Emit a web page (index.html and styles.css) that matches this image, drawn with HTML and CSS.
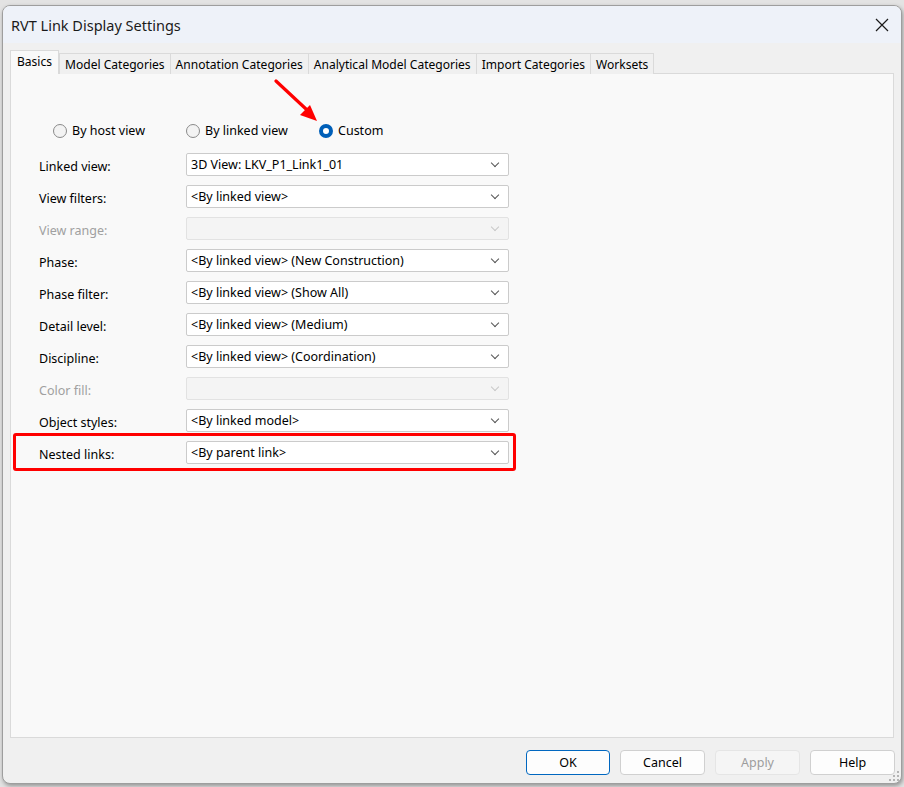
FILE: index.html
```html
<!DOCTYPE html>
<html lang="en">
<head>
  <meta charset="UTF-8">
  <title>RVT Link Display Settings</title>
  <link rel="stylesheet" href="styles.css">
</head>
<body>
  <div class="screen">
    <div class="window">
      <div class="titlebar">
        <span class="title">RVT Link Display Settings</span>
        <svg class="close" width="14" height="14" viewBox="0 0 14 14"><path d="M1 1 L13 13 M13 1 L1 13" stroke="#1a1a1a" stroke-width="1.2" fill="none"/></svg>
      </div>

      <div class="content">
        <div class="tabs">
          <div class="tab active">Basics</div>
          <div class="tab">Model Categories</div>
          <div class="tab">Annotation Categories</div>
          <div class="tab">Analytical Model Categories</div>
          <div class="tab">Import Categories</div>
          <div class="tab">Worksets</div>
        </div>

        <div class="panel">
          <div class="modes">
            <label class="radio"><span class="dot"></span>By host view</label>
            <label class="radio"><span class="dot"></span>By linked view</label>
            <label class="radio"><span class="dot checked"></span>Custom</label>
          </div>

          <div class="fields">
            <div class="field-label">Linked view:</div>
            <div class="select">3D View: LKV_P1_Link1_01</div>

            <div class="field-label">View filters:</div>
            <div class="select">&lt;By linked view&gt;</div>

            <div class="field-label disabled">View range:</div>
            <div class="select disabled"></div>

            <div class="field-label">Phase:</div>
            <div class="select">&lt;By linked view&gt; (New Construction)</div>

            <div class="field-label">Phase filter:</div>
            <div class="select">&lt;By linked view&gt; (Show All)</div>

            <div class="field-label">Detail level:</div>
            <div class="select">&lt;By linked view&gt; (Medium)</div>

            <div class="field-label">Discipline:</div>
            <div class="select">&lt;By linked view&gt; (Coordination)</div>

            <div class="field-label disabled">Color fill:</div>
            <div class="select disabled"></div>

            <div class="field-label">Object styles:</div>
            <div class="select">&lt;By linked model&gt;</div>

            <div class="field-label">Nested links:</div>
            <div class="select">&lt;By parent link&gt;</div>
          </div>
        </div>

        <div class="buttons">
          <button class="btn default">OK</button>
          <button class="btn">Cancel</button>
          <button class="btn" disabled>Apply</button>
          <button class="btn">Help</button>
        </div>
      </div>

      <svg class="grip" width="10" height="10" viewBox="0 0 10 10">
        <rect x="8" y="0" width="2" height="2" fill="#b4b4b4"/>
        <rect x="4" y="4" width="2" height="2" fill="#b4b4b4"/>
        <rect x="8" y="4" width="2" height="2" fill="#b4b4b4"/>
        <rect x="0" y="8" width="2" height="2" fill="#b4b4b4"/>
        <rect x="4" y="8" width="2" height="2" fill="#b4b4b4"/>
        <rect x="8" y="8" width="2" height="2" fill="#b4b4b4"/>
      </svg>
    </div>

    <!-- annotations drawn over the dialog -->
    <svg class="arrow" width="60" height="60" viewBox="0 0 60 60">
      <path d="M2 2 L32 30" stroke="#ff0000" stroke-width="3.2" stroke-linecap="round" fill="none"/>
      <polygon points="43,42 26,36 36,26" fill="#ff0000"/>
    </svg>
    <div class="highlight"></div>
  </div>
</body>
</html>
```

FILE: styles.css
```css
body {
  margin: 0;
  background-color: #d4d4d4;
  font-family: 'Noto Sans', 'Liberation Sans', sans-serif;
  color: #000;
}

.screen {
  position: relative;
  width: 904px;
  height: 787px;
  overflow: hidden;
  background-color: #e3e3e3;
}

.window {
  position: relative;
  margin: 5px 0 0 2px;
  width: 898px;
  height: 777px;
  border: 1px solid #9e9e9e;
  border-radius: 8px;
  background-color: #f0f0f0;
  box-shadow: 1px 2px 4px rgba(0, 0, 0, 0.35);
  overflow: hidden;
}

.titlebar {
  height: 37px;
  background-color: #eef2f9;
  display: flex;
  align-items: center;
  justify-content: space-between;
  padding: 0 12px 0 8px;
}

.title {
  font-size: 14.5px;
  color: #1a1a1a;
}

.close {
  display: block;
}

.content {
  padding: 8px 7px 0 7px;
}

.tabs {
  display: flex;
  align-items: flex-end;
  height: 23px;
  position: relative;
  z-index: 1;
}

.tab {
  height: 20px;
  line-height: 21px;
  padding: 0 5px;
  font-size: 12.05px;
  background-color: #f0f0f0;
  border: 1px solid #dadada;
  border-bottom: none;
  margin-left: -1px;
  white-space: nowrap;
}

.tab.active {
  height: 23px;
  line-height: 21px;
  background-color: #f9f9f9;
  margin-left: 0;
  margin-right: 1px;
  padding: 0 6px;
  border-color: #dadada;
}

.panel {
  height: 663px;
  background-color: #f9f9f9;
  border: 1px solid #dadada;
  margin-top: -1px;
}

.modes {
  display: flex;
  padding: 49px 0 0 42px;
  height: 15px;
}

.radio {
  width: 133px;
  display: flex;
  align-items: center;
  gap: 5px;
  font-size: 12.5px;
}

.dot {
  width: 14px;
  height: 14px;
  border-radius: 50%;
  border: 1px solid #8a8a8a;
  background-color: #f3f3f3;
  box-sizing: border-box;
}

.dot.checked {
  border: 4px solid #005fb8;
  background-color: #fff;
}

.fields {
  display: grid;
  grid-template-columns: 147px 323px;
  grid-auto-rows: 23px;
  row-gap: 9px;
  padding: 15px 0 0 28px;
}

.field-label {
  font-size: 12.5px;
  line-height: 23px;
  padding-top: 2px;
}

.field-label.disabled {
  color: #a0a0a0;
}

.select {
  position: relative;
  background-color: #fff;
  border: 1px solid #cbcbcb;
  border-radius: 2px;
  font-size: 12.5px;
  line-height: 21px;
  padding-left: 4px;
  white-space: nowrap;
}

.select::after {
  content: "";
  position: absolute;
  right: 10px;
  top: 6px;
  width: 5px;
  height: 5px;
  border-right: 1px solid #555;
  border-bottom: 1px solid #555;
  transform: rotate(45deg);
}

.select.disabled {
  background-color: #f4f4f4;
  border-color: #e2e2e2;
}

.select.disabled::after {
  border-color: #c8c8c8;
}

.buttons {
  display: flex;
  justify-content: flex-end;
  gap: 10px;
  padding: 12px 0 0 0;
  margin-right: -1px;
}

.btn {
  width: 85px;
  height: 25px;
  font-family: inherit;
  font-size: 12.5px;
  color: #000;
  background-color: #fdfdfd;
  border: 1px solid #d0d0d0;
  border-radius: 4px;
  padding: 0;
}

.btn.default {
  border-color: #0067c0;
  width: 84px;
}

.btn:disabled {
  color: #9d9d9d;
  background-color: #f5f5f5;
  border-color: #e5e5e5;
}

.grip {
  position: absolute;
  right: 2px;
  bottom: 2px;
}

.arrow {
  position: absolute;
  left: 274px;
  top: 79px;
}

.highlight {
  position: absolute;
  left: 13px;
  top: 433px;
  width: 497px;
  height: 32px;
  border: 3px solid #ff0000;
  border-radius: 3px;
}
```
